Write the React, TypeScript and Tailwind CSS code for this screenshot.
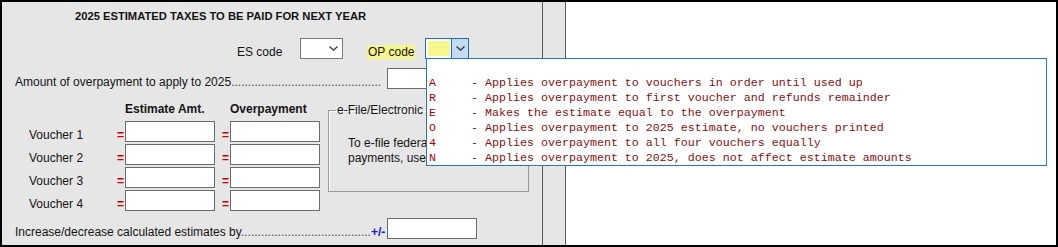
const opCodes = [
  ['A', '- Applies overpayment to vouchers in order until used up'],
  ['R', '- Applies overpayment to first voucher and refunds remainder'],
  ['E', '- Makes the estimate equal to the overpayment'],
  ['O', '- Applies overpayment to 2025 estimate, no vouchers printed'],
  ['4', '- Applies overpayment to all four vouchers equally'],
  ['N', '- Applies overpayment to 2025, does not affect estimate amounts'],
];

function Chevron({ color }: { color: string }) {
  return (
    <svg width="9" height="5" viewBox="0 0 9 5" className="block">
      <polyline points="0.5,0.5 4.5,4.2 8.5,0.5" fill="none" stroke={color} strokeWidth="1.2" />
    </svg>
  );
}

function Field({ w = 'w-[90px]' }: { w?: string }) {
  return <input type="text" readOnly className={`${w} h-[21px] border border-[#6b6b6b] bg-white outline-none`} />;
}

export default function App() {
  return (
    <div className="relative w-[1058px] h-[247px] border-2 border-black flex bg-white overflow-hidden font-['Liberation_Sans',Arial,sans-serif] text-[12px] leading-[14px] text-[#141414]">
      {/* form panel */}
      <div className="w-[541px] h-full bg-[#e6e6e6] border-r border-[#5a5a5a] flex flex-col">
        <div className="h-[36px] pt-[7px] pl-[73px] text-[11.2px] font-bold whitespace-nowrap">
          2025 ESTIMATED TAXES TO BE PAID FOR NEXT YEAR
        </div>

        <div className="h-[21px] flex items-end">
          <span className="ml-[235px] w-[63px]">ES code</span>
          <div className="w-[43px] h-[21px] border border-[#7a7a7a] bg-white flex items-center justify-end pr-[4px]">
            <Chevron color="#333" />
          </div>
          <span className="ml-[24px] px-[1px] bg-[#f6f68c]">OP code</span>
          <div className="ml-[10px] w-[44px] h-[21px] border border-[#1c6fc4] bg-white flex">
            <div className="ml-[2px] mt-[2px] w-[22px] h-[15px] bg-[#f7f78f]" />
            <div className="ml-[1px] w-[17px] h-full bg-[#c6dbef] border-l border-[#1c6fc4] flex items-center justify-center">
              <Chevron color="#1f2f40" />
            </div>
          </div>
        </div>

        <div className="mt-[9px] h-[21px] flex items-end">
          <div className="ml-[13px] w-[372px] whitespace-nowrap">
            Amount of overpayment to apply to 2025<span className="text-[#444]">{'.'.repeat(45)}</span>
          </div>
          <Field />
        </div>

        <div className="mt-[13px] flex">
          <div className="pl-[27px]">
            <div className="h-[14px] mb-[5px] flex font-bold">
              <span className="ml-[96px] w-[105px]">Estimate Amt.</span>
              <span>Overpayment</span>
            </div>
            <div className="flex flex-col gap-[2px]">
              {[1, 2, 3, 4].map((n) => (
                <div key={n} className="h-[21px] flex items-end">
                  <span className="w-[88px]">Voucher {n}</span>
                  <span className="w-[8px] font-bold text-[#d00000]">=</span>
                  <Field />
                  <span className="ml-[7px] w-[8px] font-bold text-[#d00000]">=</span>
                  <Field />
                </div>
              ))}
            </div>
          </div>

          <fieldset className="ml-[8px] mt-[1px] w-[201px] h-[89px] border border-[#9a9a9a] pl-[7px] shadow-[inset_1px_1px_0_#fff]">
            <legend className="px-[1px]">e-File/Electronic Payment</legend>
            <div className="pl-[12px] mt-[19px] leading-[15px] whitespace-nowrap">
              <div>To e-file federal estimated</div>
              <div>payments, use the EF screen</div>
            </div>
          </fieldset>
        </div>

        <div className="mt-[7px] h-[21px] flex items-end">
          <div className="ml-[13px] w-[356px] whitespace-nowrap">
            Increase/decrease calculated estimates by<span className="text-[#444]">{'.'.repeat(39)}</span>
          </div>
          <span className="w-[16px] font-bold text-[#1020c8]">+/-</span>
          <Field />
        </div>
      </div>

      <div className="w-[23px] h-full bg-[#e6e6e6] border-r border-[#5a5a5a]" />
      <div className="flex-1 h-full bg-white" />

      {/* OP code drop-down list */}
      <div className="absolute left-[424px] top-[56px] w-[621px] h-[108px] border border-[#1c7cd5] bg-white pt-[17px] pl-[2px] font-['Courier_New','Liberation_Mono',monospace] text-[11.67px] leading-[15px] text-[#8a1010]">
        {opCodes.map(([code, desc]) => (
          <div key={code} className="whitespace-pre">
            <span className="text-[#b00000]">{code}</span>
            {'     '}
            {desc}
          </div>
        ))}
      </div>
    </div>
  );
}
